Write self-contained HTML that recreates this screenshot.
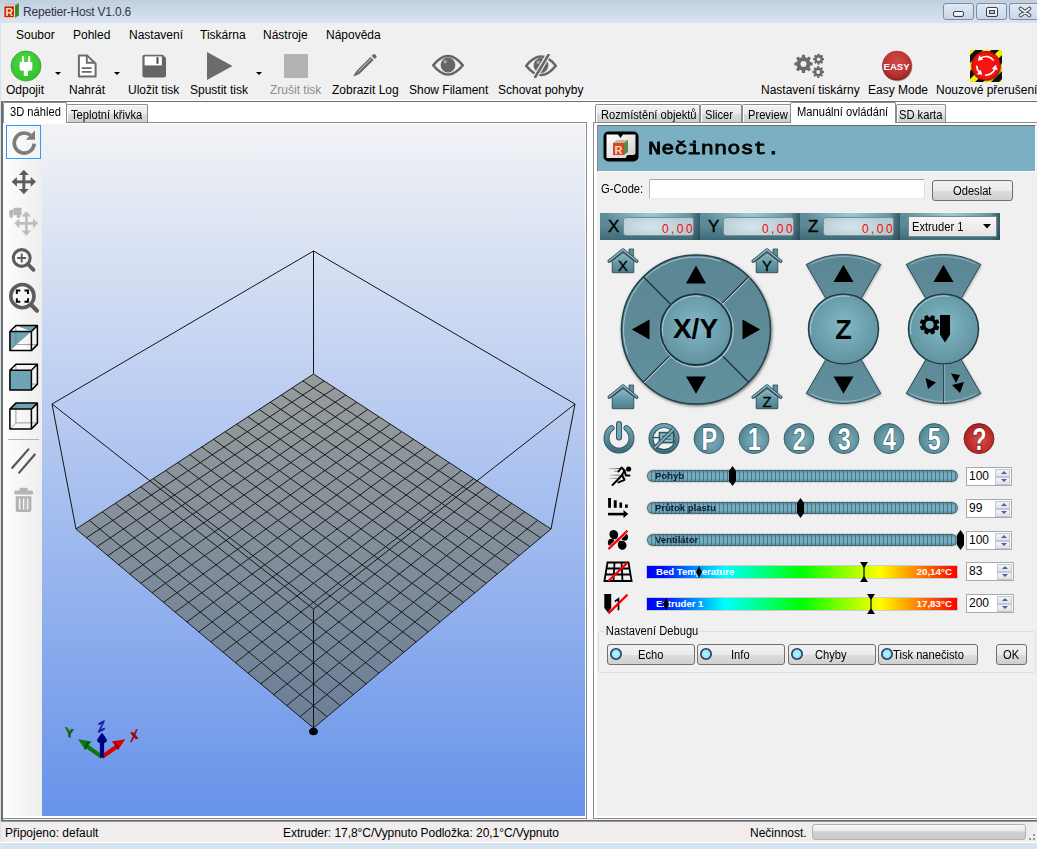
<!DOCTYPE html>
<html><head><meta charset="utf-8"><style>
*{margin:0;padding:0;box-sizing:border-box}
html,body{width:1037px;height:849px;overflow:hidden;background:#f0f0f0;font-family:"Liberation Sans",sans-serif;font-size:12px;color:#000;position:relative}
.a{position:absolute}
.t{position:absolute;white-space:nowrap;line-height:14px;font-size:12px}
#title{left:0;top:0;width:1037px;height:23px;background:linear-gradient(#c1cfdd,#d8e4f1)}
#frameL{left:0;top:22px;width:1px;height:827px;background:#d4e3f3}
#frameB{left:0;top:843px;width:1037px;height:6px;background:#d6e3f1}
.wb{position:absolute;top:3px;height:17px;border:1px solid #7d8ba6;border-radius:3px;background:linear-gradient(#dfe8f3,#cad7e8)}
.tab{position:absolute;border:1px solid #898c95;border-bottom:none;box-shadow:inset 1px 1px 0 #fff;border-radius:2px 2px 0 0;background:linear-gradient(#f2f2f2 0%,#ebebeb 50%,#dddddd 51%,#cfcfcf 100%)}
.tab.act{background:#fff}
.tt{position:absolute;white-space:nowrap;line-height:14px;font-size:12px;transform:scaleX(0.93);transform-origin:0 0}
.ms{position:absolute;white-space:nowrap;line-height:14px;font-size:12px;transform:scaleX(0.93);transform-origin:0 0}
.btn{position:absolute;border:1px solid #707070;border-radius:3px;background:linear-gradient(#f2f2f2 0%,#ebebeb 50%,#dddddd 51%,#cfcfcf 100%);text-align:center}
.num{position:absolute;width:46px;height:19px;border:1px solid #a9a9b0;background:#fff}
.num .v{position:absolute;left:2px;top:1px;font-size:12px;line-height:14px}
.spin{position:absolute;right:1px;top:1px;width:15px;height:15px}
.spin div{position:absolute;left:0;width:15px;height:8px;border:1px solid #c3c6cc;background:linear-gradient(#f4f4f6,#e1e3e8)}
.sl{position:absolute;left:647px;width:311px;height:12px;border-radius:6px;background:linear-gradient(rgba(20,50,60,0.4),rgba(255,255,255,0) 30%,rgba(255,255,255,0) 70%,rgba(20,50,60,0.4)),linear-gradient(90deg,#75afc0 0,#75afc0 3px,#4a7b8a 3px,#4a7b8a 4px);background-size:100% 100%,4px 100%;background-position:0 0,1px 0;box-shadow:inset 0 0 0 1px #4d6d77,0 0 1px 0.5px rgba(90,70,70,0.35)}
.sll{position:absolute;left:8px;top:-1px;font-size:9.5px;font-weight:bold;color:#0d1a3a;line-height:14px}
.tb{position:absolute;width:13px;height:19px;border-radius:50%;background:#000}
.temp{position:absolute;left:647px;width:310px;height:12px;background:linear-gradient(90deg,#0000ff 0%,#0010ff 5%,#00ffff 25%,#00ff00 50%,#ffff00 75%,#ff0000 100%);box-shadow:0 0 0 1px rgba(0,0,0,0.15)}
.tl{position:absolute;top:-1px;font-size:9.6px;font-weight:bold;color:#fff;line-height:14px}
.xs{top:213px;width:100px;height:27px;background:linear-gradient(90deg,rgba(0,0,0,0) 0,rgba(0,0,0,0) 90%,rgba(20,50,60,0.55) 100%),radial-gradient(ellipse 45% 70% at 50% 0%,rgba(170,215,228,0.85),rgba(170,215,228,0) 100%),linear-gradient(#5f8d99,#5a8894 50%,#3e6a77)}
.xf{top:217px;width:71px;height:19px;border:1px solid #7d8c90;border-radius:3px;background:radial-gradient(ellipse 50% 80% at 40% 50%,#d3e6eb,#b7ccd2)}

</style></head><body>
<!-- title bar -->
<div id="title" class="a"></div>
<svg class="a" style="left:0px;top:0px" width="22" height="22" viewBox="0 0 22 22">
<path d="M3.5 5.5 L6 3 H19 L14.8 5.5 Z" fill="#c9c0d8"/>
<path d="M14.8 5.5 L19 3 V15.5 L14.8 18 Z" fill="#4f9a3c"/><path d="M15.6 6 L18.4 4.2 V15 L15.6 16.8 Z" fill="#2f7a22" opacity="0.7"/>
<rect x="3.5" y="5.5" width="11.3" height="12.5" fill="#f3d9a6"/>
<rect x="4.4" y="6.4" width="9.5" height="10.7" fill="#c81e14"/>
<text x="9.2" y="15.6" font-family="Liberation Sans" font-weight="bold" font-size="10.5" fill="#fbe7b4" text-anchor="middle">R</text>
</svg>
<div class="t" style="left:23px;top:5px;font-size:12px;color:#33334d;letter-spacing:-0.2px">Repetier-Host V1.0.6</div>
<div class="wb" style="left:943px;width:31px"><div class="a" style="left:9px;top:7px;width:11px;height:6px;border:1px solid #3a3f4a;border-radius:2px;background:linear-gradient(#fdfdfd,#e2e2e2)"></div></div>
<div class="wb" style="left:976px;width:31px"><div class="a" style="left:9px;top:3px;width:12px;height:10px;border:1px solid #3a3f4a;border-radius:2px;background:linear-gradient(#fdfdfd,#e6e6e6)"><div class="a" style="left:2px;top:2px;width:6px;height:4px;border:1px solid #3a3f4a;background:#b5c6dc"></div></div></div>
<div class="wb" style="left:1009px;width:32px"><svg class="a" style="left:8px;top:2px" width="14" height="12" viewBox="0 0 14 12"><path d="M2.5 2.5 L11.5 9.5 M11.5 2.5 L2.5 9.5" stroke="#3a3f4a" stroke-width="3.6" stroke-linecap="round"/><path d="M2.5 2.5 L11.5 9.5 M11.5 2.5 L2.5 9.5" stroke="#f5f5f5" stroke-width="1.8" stroke-linecap="round"/></svg></div>
<div id="frameL" class="a"></div>

<!-- menu -->
<div class="t" style="left:16px;top:28px">Soubor</div>
<div class="t" style="left:73px;top:28px">Pohled</div>
<div class="t" style="left:129px;top:28px">Nastavení</div>
<div class="t" style="left:200px;top:28px">Tiskárna</div>
<div class="t" style="left:263px;top:28px">Nástroje</div>
<div class="t" style="left:326px;top:28px">Nápověda</div>

<!-- toolbar -->
<svg class="a" style="left:10px;top:50px" width="32" height="32" viewBox="0 0 32 32">
<defs><radialGradient id="gg" cx="0.45" cy="0.35" r="0.7"><stop offset="0" stop-color="#4ada40"/><stop offset="1" stop-color="#34bf2c"/></radialGradient></defs>
<circle cx="16" cy="16" r="15" fill="url(#gg)" stroke="#3a9a33" stroke-width="0.8"/>
<rect x="11.9" y="6" width="2" height="7" fill="#fff"/><rect x="18.2" y="6" width="2" height="7" fill="#fff"/>
<path d="M9.7 12 H22.3 V18.8 Q22.3 20.8 20.3 20.8 H17.9 V26.1 H13.8 V20.8 H11.7 Q9.7 20.8 9.7 18.8 Z" fill="#fff"/>
</svg>
<svg class="a" style="left:55px;top:72px" width="7" height="4"><path d="M0 0H6L3 3Z" fill="#000"/></svg>
<svg class="a" style="left:77px;top:54px" width="20" height="24" viewBox="0 0 20 24">
<path d="M1.9 1.4 H10 L18.6 9.8 V22.6 H1.9 Z" fill="#fff" stroke="#6b6b6b" stroke-width="2" stroke-linejoin="round"/>
<path d="M9.8 1.6 V8.8 H18.4" fill="none" stroke="#6b6b6b" stroke-width="1.9"/>
<rect x="4.8" y="13.2" width="9.8" height="1.8" fill="#6b6b6b"/><rect x="4.8" y="17" width="9.8" height="1.8" fill="#6b6b6b"/>
</svg>
<svg class="a" style="left:114px;top:72px" width="7" height="4"><path d="M0 0H6L3 3Z" fill="#000"/></svg>
<svg class="a" style="left:142px;top:54px" width="25" height="24" viewBox="0 0 25 24">
<path d="M2.4 0.8 H20.8 L24 4 V21.4 Q24 23.4 22 23.4 H2.4 Q0.4 23.4 0.4 21.4 V2.8 Q0.4 0.8 2.4 0.8Z" fill="#666"/>
<rect x="2.6" y="2.4" width="17.2" height="9" fill="#fff"/><rect x="14.4" y="3.2" width="2.2" height="6.6" fill="#555"/>
</svg>
<svg class="a" style="left:206px;top:52px" width="27" height="28" viewBox="0 0 27 28"><path d="M1 0 L26.5 14 L1 28 Z" fill="#6b6b6b"/></svg>
<svg class="a" style="left:256px;top:72px" width="7" height="4"><path d="M0 0H6L3 3Z" fill="#000"/></svg>
<div class="a" style="left:284px;top:54px;width:24px;height:24px;background:#b3b3b3;border-radius:1px"></div>
<svg class="a" style="left:352px;top:53px" width="26" height="24" viewBox="0 0 26 24">
<path d="M4.2 18.2 L18.5 3.9 L21.5 6.9 L7.2 21.2 Z" fill="#666"/><path d="M4.2 18.2 L7.2 21.2 L1 23.6 Z" fill="#666"/>
<path d="M19.6 2.8 L21 1.4 Q22 0.4 23.2 1.4 L24.2 2.4 Q25.2 3.6 24.2 4.6 L22.7 6 Z" fill="#666"/>
<path d="M6.3 18.6 L19.2 5.7" stroke="#d8d8d8" stroke-width="0.9"/>
</svg>
<svg class="a" style="left:431px;top:54px" width="34" height="24" viewBox="0 0 34 24">
<path d="M2.2 11.2 Q17 -7.3 31.8 11.2 Q17 29.7 2.2 11.2 Z" fill="none" stroke="#666" stroke-width="2.6" stroke-linejoin="round"/>
<circle cx="17" cy="11" r="7.4" fill="#666"/><circle cx="14.2" cy="7.8" r="1.7" fill="#a5a5a5"/>
</svg>
<svg class="a" style="left:525px;top:54px" width="34" height="24" viewBox="0 0 34 24">
<path d="M1.2 11.7 Q16 -6.8 30.8 11.7 Q16 30.2 1.2 11.7 Z" fill="none" stroke="#666" stroke-width="2.6" stroke-linejoin="round"/>
<circle cx="16" cy="11.5" r="7.4" fill="#666"/><circle cx="13.2" cy="8.3" r="1.7" fill="#a5a5a5"/>
<path d="M23.5 0.5 L10 23.5" stroke="#f0f0f0" stroke-width="5"/><path d="M23.5 0.8 L10.2 23" stroke="#666" stroke-width="2.6" stroke-linecap="round"/>
</svg>
<svg class="a" style="left:790px;top:50px" width="40" height="32" viewBox="790 50 40 32"><g transform="translate(803.5 63.9)" fill="#6b6b6b"><circle r="7"/><rect x="-1.6" y="-9.1" width="3.2" height="9.1" rx="0.6" transform="rotate(0.0)"/><rect x="-1.6" y="-9.1" width="3.2" height="9.1" rx="0.6" transform="rotate(45.0)"/><rect x="-1.6" y="-9.1" width="3.2" height="9.1" rx="0.6" transform="rotate(90.0)"/><rect x="-1.6" y="-9.1" width="3.2" height="9.1" rx="0.6" transform="rotate(135.0)"/><rect x="-1.6" y="-9.1" width="3.2" height="9.1" rx="0.6" transform="rotate(180.0)"/><rect x="-1.6" y="-9.1" width="3.2" height="9.1" rx="0.6" transform="rotate(225.0)"/><rect x="-1.6" y="-9.1" width="3.2" height="9.1" rx="0.6" transform="rotate(270.0)"/><rect x="-1.6" y="-9.1" width="3.2" height="9.1" rx="0.6" transform="rotate(315.0)"/></g><circle cx="803.5" cy="63.9" r="3.0" fill="#f0f0f0"/><g transform="translate(818.6 59.2)" fill="#6b6b6b"><circle r="4.1"/><rect x="-1.1" y="-5.5" width="2.2" height="5.5" rx="0.6" transform="rotate(0.0)"/><rect x="-1.1" y="-5.5" width="2.2" height="5.5" rx="0.6" transform="rotate(45.0)"/><rect x="-1.1" y="-5.5" width="2.2" height="5.5" rx="0.6" transform="rotate(90.0)"/><rect x="-1.1" y="-5.5" width="2.2" height="5.5" rx="0.6" transform="rotate(135.0)"/><rect x="-1.1" y="-5.5" width="2.2" height="5.5" rx="0.6" transform="rotate(180.0)"/><rect x="-1.1" y="-5.5" width="2.2" height="5.5" rx="0.6" transform="rotate(225.0)"/><rect x="-1.1" y="-5.5" width="2.2" height="5.5" rx="0.6" transform="rotate(270.0)"/><rect x="-1.1" y="-5.5" width="2.2" height="5.5" rx="0.6" transform="rotate(315.0)"/></g><circle cx="818.6" cy="59.2" r="1.7" fill="#f0f0f0"/><g transform="translate(818.2 72)" fill="#6b6b6b"><circle r="4.4"/><rect x="-1.15" y="-5.9" width="2.3" height="5.9" rx="0.6" transform="rotate(0.0)"/><rect x="-1.15" y="-5.9" width="2.3" height="5.9" rx="0.6" transform="rotate(45.0)"/><rect x="-1.15" y="-5.9" width="2.3" height="5.9" rx="0.6" transform="rotate(90.0)"/><rect x="-1.15" y="-5.9" width="2.3" height="5.9" rx="0.6" transform="rotate(135.0)"/><rect x="-1.15" y="-5.9" width="2.3" height="5.9" rx="0.6" transform="rotate(180.0)"/><rect x="-1.15" y="-5.9" width="2.3" height="5.9" rx="0.6" transform="rotate(225.0)"/><rect x="-1.15" y="-5.9" width="2.3" height="5.9" rx="0.6" transform="rotate(270.0)"/><rect x="-1.15" y="-5.9" width="2.3" height="5.9" rx="0.6" transform="rotate(315.0)"/></g><circle cx="818.2" cy="72" r="1.9" fill="#f0f0f0"/></svg>
<svg class="a" style="left:880px;top:49px" width="34" height="34" viewBox="880 49 34 34">
<defs><radialGradient id="er" cx="0.5" cy="0.35" r="0.65"><stop offset="0" stop-color="#d24a48"/><stop offset="0.7" stop-color="#b73332"/><stop offset="1" stop-color="#8e2020"/></radialGradient></defs>
<circle cx="897.5" cy="66.5" r="15" fill="#000" opacity="0.25"/>
<circle cx="897" cy="65.7" r="14.9" fill="url(#er)"/>
<text x="896.6" y="69.8" font-family="Liberation Sans" font-weight="bold" font-size="9.6" fill="#fff" text-anchor="middle">EASY</text>
</svg>
<svg class="a" style="left:969px;top:49px" width="34" height="34" viewBox="969 49 34 34"><defs><pattern id="hz" width="11.3" height="11.3" patternUnits="userSpaceOnUse" patternTransform="translate(970 50) rotate(45) translate(3.65 0)"><rect width="11.3" height="11.3" fill="#111"/><rect x="5.65" width="5.65" height="11.3" fill="#f5f000"/></pattern><radialGradient id="rb" cx="0.5" cy="0.5" r="0.5"><stop offset="0" stop-color="#ff1010"/><stop offset="0.85" stop-color="#f41010"/><stop offset="1" stop-color="#b00c0c"/></radialGradient></defs><rect x="970" y="50" width="32" height="32" fill="url(#hz)"/><circle cx="986.5" cy="66.5" r="15" fill="#000" opacity="0.35"/><circle cx="986" cy="65.8" r="14.7" fill="url(#rb)"/><path d="M993.62 60.47 A9.3 9.3 0 0 0 980.80 58.09" fill="none" stroke="#fff" stroke-width="1.7"/><path d="M977.84 60.63 L979.26 55.32 L983.27 59.78 Z" fill="#fff"/><path d="M976.70 65.80 A9.3 9.3 0 0 0 979.31 72.26" fill="none" stroke="#fff" stroke-width="1.7"/><path d="M982.32 74.73 L976.85 74.26 L980.55 69.53 Z" fill="#fff"/><path d="M985.19 75.06 A9.3 9.3 0 0 0 994.84 68.67" fill="none" stroke="#fff" stroke-width="1.7"/><path d="M995.61 64.85 L997.77 69.91 L991.86 68.86 Z" fill="#fff"/></svg>
<div class="t" style="left:6px;top:83px">Odpojit</div>
<div class="t" style="left:69px;top:83px">Nahrát</div>
<div class="t" style="left:128px;top:83px">Uložit tisk</div>
<div class="t" style="left:190px;top:83px">Spustit tisk</div>
<div class="t" style="left:270px;top:83px;color:#8d8d8d">Zrušit tisk</div>
<div class="t" style="left:332px;top:83px">Zobrazit Log</div>
<div class="t" style="left:409px;top:83px">Show Filament</div>
<div class="t" style="left:498px;top:83px">Schovat pohyby</div>
<div class="t" style="left:761px;top:83px">Nastavení tiskárny</div>
<div class="t" style="left:868px;top:83px">Easy Mode</div>
<div class="t" style="left:936px;top:83px">Nouzové přerušení</div>

<!-- split container border -->
<div class="a" style="left:1px;top:100px;width:1036px;height:1px;background:#fff"></div>
<div class="a" style="left:1px;top:101px;width:1036px;height:1px;background:#6d6d6d"></div>
<div class="a" style="left:1px;top:101px;width:2px;height:720px;background:#6d6d6d"></div>
<div class="a" style="left:1px;top:820px;width:1036px;height:1px;background:#6a6a6a"></div><div class="a" style="left:1px;top:821px;width:1036px;height:1px;background:#9a9a9a"></div>
<div class="a" style="left:3px;top:102px;width:1034px;height:717px;background:#fff"></div>

<!-- left tabs -->
<div class="tab" style="left:66px;top:104px;width:82px;height:18px"></div>
<div class="tt" style="left:71px;top:108px">Teplotní křivka</div>
<div class="a" style="left:3px;top:122px;width:584px;height:1px;background:#898c95"></div>
<div class="tab act" style="left:3px;top:102px;width:64px;height:21px;border-color:#898c95"></div>
<div class="tt" style="left:10px;top:105px">3D náhled</div>
<!-- left tab page -->
<div class="a" style="left:586px;top:122px;width:1px;height:697px;background:#898c95"></div>
<div class="a" style="left:3px;top:818px;width:584px;height:1px;background:#898c95"></div>
<div class="a" style="left:4px;top:124px;width:38px;height:692px;background:linear-gradient(90deg,#fdfdfd,#eeeeee)"></div>
<div class="a" style="left:42px;top:124px;width:543px;height:692px;background:linear-gradient(#f2f3f5,#6793ea)"></div>

<!-- 3D view -->
<svg class="a" style="left:42px;top:123px" width="544" height="694" viewBox="0 0 544 694">
<defs><linearGradient id="bed" gradientUnits="userSpaceOnUse" x1="0" y1="251" x2="0" y2="605"><stop offset="0" stop-color="#979c9c"/><stop offset="1" stop-color="#6b7f98"/></linearGradient></defs>
<path d="M271.5 251 L509 406 L271.5 605 L34 406 Z" fill="url(#bed)"/>
<path d="M271.50 251.00L34.00 406.00M271.50 251.00L509.00 406.00M282.12 257.93L44.46 414.77M260.88 257.93L498.54 414.77M292.86 264.94L55.06 423.65M250.14 264.94L487.94 423.65M303.72 272.03L65.79 432.64M239.28 272.03L477.21 432.64M314.70 279.20L76.66 441.74M228.30 279.20L466.34 441.74M325.81 286.45L87.66 450.96M217.19 286.45L455.34 450.96M337.05 293.78L98.81 460.30M205.95 293.78L444.19 460.30M348.41 301.19L110.10 469.77M194.59 301.19L432.90 469.77M359.91 308.70L121.54 479.35M183.09 308.70L421.46 479.35M371.54 316.29L133.14 489.07M171.46 316.29L409.86 489.07M383.30 323.97L144.88 498.91M159.70 323.97L398.12 498.91M395.21 331.73L156.78 508.88M147.79 331.73L386.22 508.88M407.25 339.60L168.84 518.99M135.75 339.60L374.16 518.99M419.44 347.55L181.07 529.23M123.56 347.55L361.93 529.23M431.77 355.60L193.46 539.61M111.23 355.60L349.54 539.61M444.26 363.75L206.02 550.14M98.74 363.75L336.98 550.14M456.89 371.99L218.76 560.81M86.11 371.99L324.24 560.81M469.68 380.34L231.67 571.62M73.32 380.34L311.33 571.62M482.63 388.79L244.76 582.59M60.37 388.79L298.24 582.59M495.73 397.34L258.04 593.72M47.27 397.34L284.96 593.72M509.00 406.00L271.50 605.00M34.00 406.00L271.50 605.00" stroke="#1a1a1a" stroke-width="1" fill="none"/>
<path d="M271.5 128 L10 281 L271.5 486 L533 281 Z M271.5 128 V251 M10 281 L34 406 M533 281 L509 406 M271.5 486 V605" stroke="#141414" stroke-width="1" fill="none"/>
<ellipse cx="271.5" cy="608.5" rx="4.5" ry="3.8" fill="#000"/>
</svg>
<!-- axes -->
<svg class="a" style="left:60px;top:712px" width="85" height="52" viewBox="60 712 85 52">
<path d="M102 757 L85 745" stroke="#0a7a0a" stroke-width="4"/><path d="M78 739.3 L91.5 741.5 L85 749.5 Z" fill="#0a7a0a"/><path d="M88.5 741.5 L85 749.5" stroke="#064a06" stroke-width="1.6"/>
<path d="M102 757 L119 745" stroke="#d80000" stroke-width="4"/><path d="M125.3 739.3 L111.8 741.5 L118.3 749.5 Z" fill="#d80000"/><path d="M114.8 741.5 L118.3 749.5" stroke="#880000" stroke-width="1.6"/>
<path d="M102 757.5 V742" stroke="#000080" stroke-width="4.2"/><path d="M102 732.8 Q104 735 107 740 Q107 743 102 743.5 Q97 743 97 740 Q100 735 102 732.8 Z" fill="#000080"/>
<text transform="translate(69.4 737) skewY(15)" font-family="Liberation Sans" font-weight="bold" font-size="12.5" fill="#0b5e0b" text-anchor="middle" stroke="#0b5e0b" stroke-width="0.6">Y</text>
<text transform="translate(101.4 731) skewY(-28) scale(0.85 1)" font-family="Liberation Sans" font-weight="bold" font-size="13" fill="#1414d2" text-anchor="middle" stroke="#1010a0" stroke-width="0.6">Z</text>
<text transform="translate(134.2 740) skewY(-28) scale(0.85 1)" font-family="Liberation Sans" font-weight="bold" font-size="13" fill="#a80000" text-anchor="middle" stroke="#900000" stroke-width="0.6">X</text>
</svg>

<!-- left toolbar icons -->
<svg class="a" style="left:4px;top:124px" width="38" height="392" viewBox="4 124 38 392">
<!-- rotate -->
<path d="M34.2 143.6 A10 10 0 1 1 30.4 135.2" fill="none" stroke="#5c5c5c" stroke-width="3.6"/>
<path d="M35 130.5 V139.8 H25.8 Z" fill="#5c5c5c"/>
<!-- move -->
<g fill="#5c5c5c">
<rect x="22.4" y="173" width="2.9" height="18"/><rect x="15" y="180.4" width="18" height="2.9"/>
<path d="M23.85 169.7 L28.8 175 H18.9 Z"/><path d="M23.85 194.3 L28.8 189 H18.9 Z"/>
<path d="M11.6 181.85 L16.9 176.9 V186.8 Z"/><path d="M36 181.85 L30.7 176.9 V186.8 Z"/>
</g>
<!-- move object -->
<g fill="#bdbdbd">
<rect x="25" y="214.5" width="2.7" height="18"/><rect x="17.4" y="222" width="18" height="2.7"/>
<path d="M26.35 211.2 L31.2 216.5 H21.5 Z"/><path d="M26.35 235.8 L31.2 230.5 H21.5 Z"/>
<path d="M14.2 223.35 L19.5 218.5 V228.2 Z"/><path d="M38.3 223.35 L33 218.5 V228.2 Z"/>
</g>
<g fill="#b8b8b8"><rect x="13.5" y="207.8" width="8" height="7.5" rx="0.8"/><path d="M9 215.3 V211.5 L11 209.5 H13.5 V215.3 Z"/><circle cx="11.3" cy="216.3" r="1.7"/><circle cx="18.5" cy="216.3" r="1.7"/></g>
<!-- zoom in -->
<circle cx="21.7" cy="258" r="8.4" fill="none" stroke="#5c5c5c" stroke-width="3.1"/>
<path d="M27.7 264 L33.5 269.8" stroke="#5c5c5c" stroke-width="3.8" stroke-linecap="round"/>
<path d="M21.7 253.5 V262.5 M17.2 258 H26.2" stroke="#5c5c5c" stroke-width="1.9"/>
<!-- zoom fit -->
<circle cx="22.4" cy="296.1" r="11.6" fill="none" stroke="#5c5c5c" stroke-width="3.6"/>
<path d="M30.8 304.5 L37 310.7" stroke="#5c5c5c" stroke-width="4.2" stroke-linecap="round"/>
<path d="M16.8 294 V290.5 H20.3 M24.5 290.5 H28 V294 M28 298.2 V301.7 H24.5 M20.3 301.7 H16.8 V298.2" fill="none" stroke="#000" stroke-width="1.9"/>
<!-- cube 1 -->
<g stroke-linejoin="round">
<path d="M9.9 331.5 L31.4 350.6 H9.9 Z" fill="#fff"/>
<path d="M9.9 331.5 H31.4 L9.9 350.6 Z" fill="#6fa4b4"/>
<path d="M9.9 331.5 L15.9 325.5 H37.4 L31.4 331.5 Z" fill="#6fa4b4"/>
<path d="M15.9 325.5 L31.4 331.5 H9.9 Z" fill="#fff"/>
<path d="M15.9 325.5 V344.6 H37.4 M15.9 344.6 L9.9 350.6" fill="none" stroke="#777" stroke-width="0.7"/>
<path d="M9.9 331.5 H31.4 V350.6 H9.9 Z M9.9 331.5 L15.9 325.5 H37.4 V344.6 L31.4 350.6 M31.4 331.5 L37.4 325.5" fill="none" stroke="#000" stroke-width="1.5"/>
<!-- cube 2 -->
<path d="M15.9 364.3 V384.1 H37.4 M15.9 384.1 L9.9 390.1" fill="none" stroke="#777" stroke-width="0.7"/>
<path d="M9.9 370.3 H31.4 V390.1 H9.9 Z" fill="#6fa4b4"/>
<path d="M9.9 370.3 H31.4 V390.1 H9.9 Z M9.9 370.3 L15.9 364.3 H37.4 V384.1 L31.4 390.1 M31.4 370.3 L37.4 364.3" fill="none" stroke="#000" stroke-width="1.5"/>
<!-- cube 3 -->
<path d="M9.9 409.1 L15.9 403.1 H37.4 L31.4 409.1 Z" fill="#6fa4b4"/>
<path d="M15.9 403.1 V422.9 H37.4 M15.9 422.9 L9.9 428.9" fill="none" stroke="#777" stroke-width="0.7"/>
<path d="M9.9 409.1 H31.4 V428.9 H9.9 Z M9.9 409.1 L15.9 403.1 H37.4 V422.9 L31.4 428.9 M31.4 409.1 L37.4 403.1" fill="none" stroke="#000" stroke-width="1.5"/>
</g>
<!-- separator -->
<rect x="8" y="439" width="31" height="1" fill="#b4b4b4"/>
<!-- parallel lines -->
<path d="M12.3 467.8 L28.4 449.4 M19.2 472.6 L34.8 454.5" stroke="#555" stroke-width="2.2" stroke-linecap="round"/>
<!-- trash -->
<g fill="#b3b3b3"><rect x="19.4" y="487.8" width="8.5" height="3.5" rx="1.5"/><rect x="14.1" y="490.6" width="19.1" height="4" rx="1.8"/>
<path d="M15.7 496.3 H31.4 V510 Q31.4 511.9 29.5 511.9 H17.6 Q15.7 511.9 15.7 510 Z"/></g>
<g fill="#f3f3f3"><rect x="18.8" y="498.5" width="1.6" height="11"/><rect x="22.8" y="498.5" width="1.6" height="11"/><rect x="26.8" y="498.5" width="1.6" height="11"/></g>
</svg>

<div class="a" style="left:6px;top:125px;width:35px;height:34px;border:1px solid #3399ff;background:rgba(255,255,255,0.2)"></div>

<!-- right tabs -->
<div class="a" style="left:593px;top:122px;width:444px;height:1px;background:#898c95"></div>
<div class="tab" style="left:595px;top:104px;width:105px;height:18px"></div>
<div class="tt" style="left:601px;top:108px">Rozmístění objektů</div>
<div class="tab" style="left:700px;top:104px;width:42px;height:18px"></div>
<div class="tt" style="left:705px;top:108px">Slicer</div>
<div class="tab" style="left:742px;top:104px;width:49px;height:18px"></div>
<div class="tt" style="left:748px;top:108px">Preview</div>
<div class="tab act" style="left:790px;top:102px;width:106px;height:21px"></div>
<div class="tt" style="left:797px;top:105px">Manuální ovládání</div>
<div class="tab" style="left:896px;top:104px;width:50px;height:18px"></div>
<div class="tt" style="left:899px;top:108px">SD karta</div>
<div class="a" style="left:593px;top:122px;width:1px;height:697px;background:#898c95"></div>
<div class="a" style="left:593px;top:818px;width:444px;height:1px;background:#898c95"></div>
<div class="a" style="left:597px;top:125px;width:440px;height:691px;background:#f0f0f0"></div>

<!-- right panel header -->
<div class="a" style="left:597px;top:125px;width:439px;height:47px;background:#7ab0c1;border-top:1px solid #6b6b6b;border-left:1px solid #8a8a8a;border-right:1px solid #fff;border-bottom:1px solid #fff"></div>
<div class="t" style="left:648px;top:139px;font-family:'Liberation Mono',monospace;font-weight:normal;-webkit-text-stroke:0.9px #000;font-size:22px;line-height:24px;transform:scaleY(0.86);transform-origin:0 0">Nečinnost.</div>

<!-- status bar -->
<div class="a" style="left:1px;top:822px;width:1036px;height:20px;background:#f0edec"></div>
<div class="a" style="left:0;top:842px;width:1037px;height:1px;background:#fff"></div>
<div id="frameB" class="a"></div>
<div class="t" style="left:5px;top:826px">Připojeno: default</div>
<div class="t" style="left:283px;top:826px;letter-spacing:-0.06px">Extruder: 17,8°C/Vypnuto Podložka: 20,1°C/Vypnuto</div>
<div class="t" style="left:750px;top:826px">Nečinnost.</div>
<div class="a" style="left:812px;top:824px;width:214px;height:16px;border:1px solid #b2b2b2;border-radius:3px;background:linear-gradient(#f7f7f7 0%,#ececec 40%,#d0d0d0 50%,#cacaca 100%)"></div>

<!-- ===== right panel content ===== -->
<!-- header icon -->
<svg class="a" style="left:603px;top:131px" width="37" height="31" viewBox="0 0 37 31">
<defs><linearGradient id="hw" x1="0" y1="0" x2="1" y2="1"><stop offset="0" stop-color="#ffffff"/><stop offset="1" stop-color="#cfcfcf"/></linearGradient></defs>
<rect x="0.5" y="0.5" width="35" height="30" rx="5" fill="#000"/>
<path d="M3.5 3.5 H15 L17.5 7 L20 3.5 H32.5 V22 Q32.5 24 30 24 H26 Q23 24 23 27 H3.5 Z" fill="url(#hw)"/>
<path d="M10 12 L14 9 H25 L21 12 Z" fill="#c8b88e"/><path d="M21 12 L25 9 V21 L21 24 Z" fill="#5f8a45"/>
<rect x="10" y="12" width="11" height="12" fill="#d8452a"/>
<text x="15.5" y="22.5" font-family="Liberation Sans" font-weight="bold" font-size="11" fill="#f2deb0" text-anchor="middle">R</text>
</svg>
<!-- G-Code row -->
<div class="ms" style="left:601px;top:182px">G-Code:</div>
<div class="a" style="left:649px;top:179px;width:276px;height:20px;background:#fff;border:1px solid #abadb3;border-radius:2px;border-color:#a0a0a0 #dcdfe6 #e3e9ef #b5b5b5"></div>
<div class="btn" style="left:932px;top:180px;width:81px;height:21px"></div>
<div class="ms" style="left:953px;top:184px">Odeslat</div>

<!-- XYZ bar -->
<div class="a xs" style="left:600px"></div>
<div class="a xs" style="left:700px"></div>
<div class="a xs" style="left:800px"></div>
<div class="a xs" style="left:900px"></div>
<div class="a xf" style="left:623px"></div>
<div class="t" style="left:608px;top:217px;font-size:17px;line-height:20px;-webkit-text-stroke:0.4px #000">X</div>
<div class="t" style="left:643px;top:222px;width:52px;text-align:right;font-size:12px;color:#ff0000;letter-spacing:2.4px">0,00</div>
<div class="a xf" style="left:723px"></div>
<div class="t" style="left:708px;top:217px;font-size:17px;line-height:20px;-webkit-text-stroke:0.4px #000">Y</div>
<div class="t" style="left:743px;top:222px;width:52px;text-align:right;font-size:12px;color:#ff0000;letter-spacing:2.4px">0,00</div>
<div class="a xf" style="left:823px"></div>
<div class="t" style="left:808px;top:217px;font-size:17px;line-height:20px;-webkit-text-stroke:0.4px #000">Z</div>
<div class="t" style="left:843px;top:222px;width:52px;text-align:right;font-size:12px;color:#ff0000;letter-spacing:2.4px">0,00</div>
<div class="a" style="left:908px;top:216px;width:89px;height:21px;border:1px solid #7a8a90;background:linear-gradient(#f6f6f6,#e4e4e4);border-radius:1px"></div>
<div class="ms" style="left:912px;top:220px">Extruder 1</div>
<svg class="a" style="left:983px;top:224px" width="9" height="5"><path d="M0 0H8L4 4.5Z" fill="#000"/></svg>

<!-- jog -->
<svg class="a" style="left:598px;top:244px" width="404" height="170" viewBox="0 0 404 170">
<defs>
<radialGradient id="ic" cx="0.5" cy="0.45" r="0.6"><stop offset="0" stop-color="#84b9c7"/><stop offset="1" stop-color="#5d8e9b"/></radialGradient>
<linearGradient id="og" x1="0" y1="0" x2="0" y2="1"><stop offset="0" stop-color="#5b8693"/><stop offset="1" stop-color="#62909d"/></linearGradient>
<filter id="sh" x="-10%" y="-10%" width="120%" height="120%"><feGaussianBlur stdDeviation="1.5"/></filter>
<linearGradient id="hg" x1="0" y1="0" x2="0" y2="1"><stop offset="0" stop-color="#80b3c1"/><stop offset="1" stop-color="#4f7f8c"/></linearGradient>
</defs>
<circle cx="98.8" cy="86.7" r="75.5" fill="#000" opacity="0.5" filter="url(#sh)"/>
<circle cx="98" cy="85.5" r="74.5" fill="url(#og)" stroke="#233f48" stroke-width="1.5"/>
<path d="M29.87 110.30 A72.5 72.5 0 0 1 122.80 17.37" stroke="#a9ccd5" stroke-width="1" fill="none" opacity="0.9"/>
<path d="M123.10 110.60 L150.68 138.18" stroke="#1d3640" stroke-width="1.4"/>
<path d="M72.90 110.60 L45.32 138.18" stroke="#1d3640" stroke-width="1.3"/>
<path d="M73.68 111.38 L46.10 138.96" stroke="#d0e4e9" stroke-width="1"/>
<path d="M72.90 60.40 L45.32 32.82" stroke="#1d3640" stroke-width="1.4"/>
<path d="M123.10 60.40 L150.68 32.82" stroke="#1d3640" stroke-width="1.3"/>
<path d="M123.88 61.18 L151.46 33.60" stroke="#d0e4e9" stroke-width="1"/>
<circle cx="98.6" cy="86.1" r="36.7" fill="none" stroke="#bcd7de" stroke-width="1.2" opacity="0.9"/>
<circle cx="98" cy="85.5" r="35.5" fill="url(#ic)" stroke="#1b343d" stroke-width="1.8"/>
<path d="M65.01 91.32 A33.5 33.5 0 0 1 103.82 52.51" stroke="#b9dbe3" stroke-width="1" fill="none" opacity="0.8"/>
<path d="M98 21.5 L108 39.5 L88 39.5 Z" fill="#000"/>
<path d="M98 149.7 L108 132.5 L88 132.5 Z" fill="#000"/>
<path d="M33.799999999999955 85.5 L51.5 75.5 L51.5 95.5 Z" fill="#000"/>
<path d="M162.20000000000005 85.5 L144.5 75.5 L144.5 95.5 Z" fill="#000"/>
<text x="97.5" y="93.80000000000001" font-family="Liberation Sans" font-weight="bold" font-size="28" text-anchor="middle" fill="#000">X/Y</text>
<path d="M245.50 85.00 L208.25 20.48 A74.5 74.5 0 0 1 282.75 20.48 Z" fill="#000" opacity="0.4" filter="url(#sh)" transform="translate(0.5 1)"/>
<path d="M245.50 85.00 L208.25 20.48 A74.5 74.5 0 0 1 282.75 20.48 Z" fill="url(#og)" stroke="#2b4a54" stroke-width="1"/>
<path d="M212.59 20.40 A72.5 72.5 0 0 1 278.41 20.40" stroke="#a9ccd5" stroke-width="0.9" fill="none" opacity="0.7"/>
<path d="M245.50 85.00 L282.75 149.52 A74.5 74.5 0 0 1 208.25 149.52 Z" fill="#000" opacity="0.4" filter="url(#sh)" transform="translate(0.5 1)"/>
<path d="M245.50 85.00 L282.75 149.52 A74.5 74.5 0 0 1 208.25 149.52 Z" fill="url(#og)" stroke="#2b4a54" stroke-width="1"/>
<path d="M278.41 149.60 A72.5 72.5 0 0 1 212.59 149.60" stroke="#a9ccd5" stroke-width="0.9" fill="none" opacity="0.7"/>
<circle cx="245.5" cy="85" r="36" fill="#9fc4ce" opacity="0.6"/>
<circle cx="245.5" cy="85" r="35" fill="url(#ic)" stroke="#1f3a44" stroke-width="1.4"/>
<path d="M213.00 90.73 A33 33 0 0 1 251.23 52.50" stroke="#b9dbe3" stroke-width="1" fill="none" opacity="0.8"/>
<path d="M245.5 20.80000000000001 L255.5 38 L235.5 38 Z" fill="#000"/>
<path d="M345.50 85.00 L308.25 20.48 A74.5 74.5 0 0 1 382.75 20.48 Z" fill="#000" opacity="0.4" filter="url(#sh)" transform="translate(0.5 1)"/>
<path d="M345.50 85.00 L308.25 20.48 A74.5 74.5 0 0 1 382.75 20.48 Z" fill="url(#og)" stroke="#2b4a54" stroke-width="1"/>
<path d="M312.59 20.40 A72.5 72.5 0 0 1 378.41 20.40" stroke="#a9ccd5" stroke-width="0.9" fill="none" opacity="0.7"/>
<path d="M345.50 85.00 L382.75 149.52 A74.5 74.5 0 0 1 308.25 149.52 Z" fill="#000" opacity="0.4" filter="url(#sh)" transform="translate(0.5 1)"/>
<path d="M345.50 85.00 L382.75 149.52 A74.5 74.5 0 0 1 308.25 149.52 Z" fill="url(#og)" stroke="#2b4a54" stroke-width="1"/>
<path d="M378.41 149.60 A72.5 72.5 0 0 1 312.59 149.60" stroke="#a9ccd5" stroke-width="0.9" fill="none" opacity="0.7"/>
<circle cx="345.5" cy="85" r="36" fill="#9fc4ce" opacity="0.6"/>
<circle cx="345.5" cy="85" r="35" fill="url(#ic)" stroke="#1f3a44" stroke-width="1.4"/>
<path d="M313.00 90.73 A33 33 0 0 1 351.23 52.50" stroke="#b9dbe3" stroke-width="1" fill="none" opacity="0.8"/>
<path d="M345.5 20.80000000000001 L355.5 38 L335.5 38 Z" fill="#000"/>
<path d="M245.5 149.7 L255.5 132.5 L235.5 132.5 Z" fill="#000"/>
<text x="245.5" y="95" font-family="Liberation Sans" font-weight="bold" font-size="27" text-anchor="middle" fill="#000">Z</text>
<path d="M345.5 120 V159.5" stroke="#2b4a54" stroke-width="1"/>
<path d="M346.7 120 V159" stroke="#a9ccd5" stroke-width="0.8" opacity="0.7"/>
<path d="M327.5 134 L338 138.5 L330 145 Z" fill="#000"/>
<path d="M353 129.5 L362 131 L358 139 Z" fill="#000"/>
<path d="M354 141 L366 138 L362 149 Z" fill="#000"/>
<g transform="translate(331.6 80.80000000000001)" fill="#000"><circle r="7.6"/><rect x="-2.1" y="-9.8" width="4.2" height="19.6" rx="0.8" transform="rotate(22.5)"/><rect x="-2.1" y="-9.8" width="4.2" height="19.6" rx="0.8" transform="rotate(67.5)"/><rect x="-2.1" y="-9.8" width="4.2" height="19.6" rx="0.8" transform="rotate(112.5)"/><rect x="-2.1" y="-9.8" width="4.2" height="19.6" rx="0.8" transform="rotate(157.5)"/><circle r="4.1" fill="#76aebd"/></g>
<path d="M342 71 H352 V90.69999999999999 L347 98.39999999999998 L342 90.69999999999999 Z" fill="#000"/>
<g transform="translate(10 4.5)"><path d="M4.2 12.5 L15 4.5 L25.8 12.5 V23.8 Q25.8 24.2 25.4 24.2 H4.6 Q4.2 24.2 4.2 23.8 Z" fill="url(#hg)" stroke="#2b4a54" stroke-width="0.9"/><path d="M21 0.5 H25.6 V10 L21 6.5 Z" fill="#5f909d" stroke="#2b4a54" stroke-width="0.8"/><path d="M1.2 12.8 L15 1.6 L28.8 12.8" fill="none" stroke="#23414b" stroke-width="3.4" stroke-linejoin="round" stroke-linecap="round"/><path d="M1.2 12.5 L15 1.3 L28.8 12.5" fill="none" stroke="#86b8c6" stroke-width="1.6" stroke-linejoin="round" stroke-linecap="round"/><path d="M5 13 L15 5.5 L25 13" fill="none" stroke="#c9c9c9" stroke-width="0.8" opacity="0.7"/><text x="15" y="22.1" font-family="Liberation Sans" font-size="14.8" text-anchor="middle" fill="#000" stroke="#000" stroke-width="0.35">X</text></g>
<g transform="translate(154 4.5)"><path d="M4.2 12.5 L15 4.5 L25.8 12.5 V23.8 Q25.8 24.2 25.4 24.2 H4.6 Q4.2 24.2 4.2 23.8 Z" fill="url(#hg)" stroke="#2b4a54" stroke-width="0.9"/><path d="M21 0.5 H25.6 V10 L21 6.5 Z" fill="#5f909d" stroke="#2b4a54" stroke-width="0.8"/><path d="M1.2 12.8 L15 1.6 L28.8 12.8" fill="none" stroke="#23414b" stroke-width="3.4" stroke-linejoin="round" stroke-linecap="round"/><path d="M1.2 12.5 L15 1.3 L28.8 12.5" fill="none" stroke="#86b8c6" stroke-width="1.6" stroke-linejoin="round" stroke-linecap="round"/><path d="M5 13 L15 5.5 L25 13" fill="none" stroke="#c9c9c9" stroke-width="0.8" opacity="0.7"/><text x="15" y="22.1" font-family="Liberation Sans" font-size="14.8" text-anchor="middle" fill="#000" stroke="#000" stroke-width="0.35">Y</text></g>
<g transform="translate(10 140.5)"><path d="M4.2 12.5 L15 4.5 L25.8 12.5 V23.8 Q25.8 24.2 25.4 24.2 H4.6 Q4.2 24.2 4.2 23.8 Z" fill="url(#hg)" stroke="#2b4a54" stroke-width="0.9"/><path d="M21 0.5 H25.6 V10 L21 6.5 Z" fill="#5f909d" stroke="#2b4a54" stroke-width="0.8"/><path d="M1.2 12.8 L15 1.6 L28.8 12.8" fill="none" stroke="#23414b" stroke-width="3.4" stroke-linejoin="round" stroke-linecap="round"/><path d="M1.2 12.5 L15 1.3 L28.8 12.5" fill="none" stroke="#86b8c6" stroke-width="1.6" stroke-linejoin="round" stroke-linecap="round"/><path d="M5 13 L15 5.5 L25 13" fill="none" stroke="#c9c9c9" stroke-width="0.8" opacity="0.7"/></g>
<g transform="translate(154 140.5)"><path d="M4.2 12.5 L15 4.5 L25.8 12.5 V23.8 Q25.8 24.2 25.4 24.2 H4.6 Q4.2 24.2 4.2 23.8 Z" fill="url(#hg)" stroke="#2b4a54" stroke-width="0.9"/><path d="M21 0.5 H25.6 V10 L21 6.5 Z" fill="#5f909d" stroke="#2b4a54" stroke-width="0.8"/><path d="M1.2 12.8 L15 1.6 L28.8 12.8" fill="none" stroke="#23414b" stroke-width="3.4" stroke-linejoin="round" stroke-linecap="round"/><path d="M1.2 12.5 L15 1.3 L28.8 12.5" fill="none" stroke="#86b8c6" stroke-width="1.6" stroke-linejoin="round" stroke-linecap="round"/><path d="M5 13 L15 5.5 L25 13" fill="none" stroke="#c9c9c9" stroke-width="0.8" opacity="0.7"/><text x="15" y="22.1" font-family="Liberation Sans" font-size="14.8" text-anchor="middle" fill="#000" stroke="#000" stroke-width="0.35">Z</text></g>
</svg>

<!-- controls -->
<svg class="a" style="left:598px;top:418px" width="400" height="42" viewBox="0 0 400 42">
<defs>
<radialGradient id="cb" cx="0.55" cy="0.55" r="0.6"><stop offset="0" stop-color="#82b6c4"/><stop offset="1" stop-color="#4f7f8c"/></radialGradient>
<radialGradient id="cr" cx="0.55" cy="0.55" r="0.6"><stop offset="0" stop-color="#e04b48"/><stop offset="1" stop-color="#a81e1c"/></radialGradient>
<linearGradient id="pw" x1="0" y1="0" x2="0" y2="1"><stop offset="0" stop-color="#6fa3b1"/><stop offset="1" stop-color="#3f6e7b"/></linearGradient>
</defs>
<path d="M13.5 10.100000000000023 A12.5 12.5 0 1 0 28.5 10.100000000000023" fill="none" stroke="#2f5560" stroke-width="6" stroke-linecap="round"/>
<path d="M13.5 10.100000000000023 A12.5 12.5 0 1 0 28.5 10.100000000000023" fill="none" stroke="url(#pw)" stroke-width="4.2" stroke-linecap="round"/>
<path d="M21 6.100000000000023 V19.600000000000023" stroke="#2f5560" stroke-width="6" stroke-linecap="round"/>
<path d="M21 6.100000000000023 V19.600000000000023" stroke="#6fa8b7" stroke-width="4" stroke-linecap="round"/>
<circle cx="66" cy="20.600000000000023" r="13" fill="none" stroke="#2f5560" stroke-width="5"/>
<circle cx="66" cy="20.600000000000023" r="13" fill="none" stroke="url(#pw)" stroke-width="3.2"/>
<rect x="61.5" y="14.600000000000023" width="14" height="10" fill="#8fc0cd" stroke="#2f5560" stroke-width="1.6"/>
<path d="M54 19.600000000000023 H61.5" stroke="#2f5560" stroke-width="1.4"/>
<path d="M64 18.100000000000023 H73.5 M64 21.100000000000023 H73.5" stroke="#2f5560" stroke-width="1"/>
<path d="M75.5 11.100000000000023 L56.5 30.100000000000023" stroke="#2f5560" stroke-width="4"/>
<path d="M75.5 11.100000000000023 L56.5 30.100000000000023" stroke="#7fb3c1" stroke-width="2"/>
<circle cx="111" cy="20.600000000000023" r="15" fill="url(#cb)" stroke="#2f5560" stroke-width="0.8" opacity="1"/>
<text transform="translate(111.3 31.800000000000022) scale(0.9 1.2)" x="0" y="0" font-family="Liberation Sans" font-weight="bold" font-size="26" text-anchor="middle" fill="#fff" stroke="#2f5560" stroke-width="1.2" paint-order="stroke">P</text>
<circle cx="156" cy="20.600000000000023" r="15" fill="url(#cb)" stroke="#2f5560" stroke-width="0.8" opacity="1"/>
<text transform="translate(156.3 31.800000000000022) scale(0.9 1.2)" x="0" y="0" font-family="Liberation Sans" font-weight="bold" font-size="26" text-anchor="middle" fill="#fff" stroke="#2f5560" stroke-width="1.2" paint-order="stroke">1</text>
<circle cx="201" cy="20.600000000000023" r="15" fill="url(#cb)" stroke="#2f5560" stroke-width="0.8" opacity="1"/>
<text transform="translate(201.3 31.800000000000022) scale(0.9 1.2)" x="0" y="0" font-family="Liberation Sans" font-weight="bold" font-size="26" text-anchor="middle" fill="#fff" stroke="#2f5560" stroke-width="1.2" paint-order="stroke">2</text>
<circle cx="246" cy="20.600000000000023" r="15" fill="url(#cb)" stroke="#2f5560" stroke-width="0.8" opacity="1"/>
<text transform="translate(246.3 31.800000000000022) scale(0.9 1.2)" x="0" y="0" font-family="Liberation Sans" font-weight="bold" font-size="26" text-anchor="middle" fill="#fff" stroke="#2f5560" stroke-width="1.2" paint-order="stroke">3</text>
<circle cx="291" cy="20.600000000000023" r="15" fill="url(#cb)" stroke="#2f5560" stroke-width="0.8" opacity="1"/>
<text transform="translate(291.3 31.800000000000022) scale(0.9 1.2)" x="0" y="0" font-family="Liberation Sans" font-weight="bold" font-size="26" text-anchor="middle" fill="#fff" stroke="#2f5560" stroke-width="1.2" paint-order="stroke">4</text>
<circle cx="336" cy="20.600000000000023" r="15" fill="url(#cb)" stroke="#2f5560" stroke-width="0.8" opacity="1"/>
<text transform="translate(336.3 31.800000000000022) scale(0.9 1.2)" x="0" y="0" font-family="Liberation Sans" font-weight="bold" font-size="26" text-anchor="middle" fill="#fff" stroke="#2f5560" stroke-width="1.2" paint-order="stroke">5</text>
<circle cx="381" cy="20.600000000000023" r="15" fill="url(#cr)" stroke="#6d1413" stroke-width="0.8" opacity="1"/>
<text transform="translate(381.3 31.800000000000022) scale(0.9 1.2)" x="0" y="0" font-family="Liberation Sans" font-weight="bold" font-size="26" text-anchor="middle" fill="#fff" stroke="#6d1413" stroke-width="1.2" paint-order="stroke">?</text>
</svg>
<div class="sl" style="top:470px"><div class="sll">Pohyb</div></div>
<svg class="a" style="left:728.5px;top:466px" width="7" height="20" viewBox="0 0 7 20"><path d="M3.5 0 L7 5 V15 L3.5 20 L0 15 V5 Z" fill="#000"/></svg>
<div class="num" style="left:966px;top:466.5px"><div class="v">100</div><div class="spin"><div style="top:0"></div><div style="top:8px"></div></div></div>
<div class="sl" style="top:502px"><div class="sll">Průtok plastu</div></div>
<svg class="a" style="left:796.9px;top:498px" width="7" height="20" viewBox="0 0 7 20"><path d="M3.5 0 L7 5 V15 L3.5 20 L0 15 V5 Z" fill="#000"/></svg>
<div class="num" style="left:966px;top:498.5px"><div class="v">99</div><div class="spin"><div style="top:0"></div><div style="top:8px"></div></div></div>
<div class="sl" style="top:534px"><div class="sll">Ventilátor</div></div>
<svg class="a" style="left:956.5px;top:530px" width="7" height="20" viewBox="0 0 7 20"><path d="M3.5 0 L7 5 V15 L3.5 20 L0 15 V5 Z" fill="#000"/></svg>
<div class="num" style="left:966px;top:530.5px"><div class="v">100</div><div class="spin"><div style="top:0"></div><div style="top:8px"></div></div></div>
<div class="temp" style="top:566px"><div class="tl" style="left:9px">Bed Temperature</div><div class="tl" style="right:5px;font-size:9.8px">20,14°C</div></div>
<svg class="a" style="left:696.2px;top:566px" width="6" height="12" viewBox="0 0 6 12"><path d="M3 0 L6 6 L3 12 L0 6 Z" fill="#000"/></svg>
<svg class="a" style="left:859.7px;top:562px" width="8" height="20" viewBox="0 0 8 20"><path d="M0 0 H8 L4 6 Z M0 20 H8 L4 14 Z" fill="#000"/><path d="M4 2 V18" stroke="#000" stroke-width="1.2"/></svg>
<div class="num" style="left:966px;top:562px;width:48px"><div class="v">83</div><div class="spin"><div style="top:0"></div><div style="top:8px"></div></div></div>
<div class="temp" style="top:598px"><div class="tl" style="left:9px">Extruder 1</div><div class="tl" style="right:5px;font-size:9.8px">17,83°C</div></div>
<svg class="a" style="left:663.3px;top:598px" width="6" height="12" viewBox="0 0 6 12"><path d="M3 0 L6 6 L3 12 L0 6 Z" fill="#000"/></svg>
<svg class="a" style="left:867px;top:594px" width="8" height="20" viewBox="0 0 8 20"><path d="M0 0 H8 L4 6 Z M0 20 H8 L4 14 Z" fill="#000"/><path d="M4 2 V18" stroke="#000" stroke-width="1.2"/></svg>
<div class="num" style="left:966px;top:594px;width:48px"><div class="v">200</div><div class="spin"><div style="top:0"></div><div style="top:8px"></div></div></div>
<div class="a" style="left:598px;top:631px;width:438px;height:42px;border:1px solid #d5dfe5;border-radius:3px"></div>
<div class="ms" style="left:604px;top:624px;padding:0 2px;background:#f0f0f0">Nastavení Debugu</div>
<div class="btn" style="left:607px;top:644px;width:88px;height:21px"></div>
<svg class="a" style="left:609px;top:647px" width="14" height="14" viewBox="0 0 14 14"><defs><radialGradient id="led607" cx="0.5" cy="0.5" r="0.5"><stop offset="0" stop-color="#b8f6ff"/><stop offset="1" stop-color="#86dcfa"/></radialGradient></defs><circle cx="7" cy="7" r="5.2" fill="url(#led607)" stroke="#2a3b55" stroke-width="1.6"/></svg>
<div class="ms" style="left:638px;top:648px">Echo</div>
<div class="btn" style="left:697px;top:644px;width:88px;height:21px"></div>
<svg class="a" style="left:699px;top:647px" width="14" height="14" viewBox="0 0 14 14"><defs><radialGradient id="led697" cx="0.5" cy="0.5" r="0.5"><stop offset="0" stop-color="#b8f6ff"/><stop offset="1" stop-color="#86dcfa"/></radialGradient></defs><circle cx="7" cy="7" r="5.2" fill="url(#led697)" stroke="#2a3b55" stroke-width="1.6"/></svg>
<div class="ms" style="left:731px;top:648px">Info</div>
<div class="btn" style="left:788px;top:644px;width:88px;height:21px"></div>
<svg class="a" style="left:790px;top:647px" width="14" height="14" viewBox="0 0 14 14"><defs><radialGradient id="led788" cx="0.5" cy="0.5" r="0.5"><stop offset="0" stop-color="#b8f6ff"/><stop offset="1" stop-color="#86dcfa"/></radialGradient></defs><circle cx="7" cy="7" r="5.2" fill="url(#led788)" stroke="#2a3b55" stroke-width="1.6"/></svg>
<div class="ms" style="left:815px;top:648px">Chyby</div>
<div class="btn" style="left:878px;top:644px;width:100px;height:21px"></div>
<svg class="a" style="left:880px;top:647px" width="14" height="14" viewBox="0 0 14 14"><defs><radialGradient id="led878" cx="0.5" cy="0.5" r="0.5"><stop offset="0" stop-color="#b8f6ff"/><stop offset="1" stop-color="#86dcfa"/></radialGradient></defs><circle cx="7" cy="7" r="5.2" fill="url(#led878)" stroke="#2a3b55" stroke-width="1.6"/></svg>
<div class="ms" style="left:893px;top:648px">Tisk nanečisto</div>
<div class="btn" style="left:996px;top:644px;width:31px;height:21px"></div>
<div class="ms" style="left:1003px;top:648px">OK</div>
<svg class="a" style="left:600px;top:462px" width="36" height="156" viewBox="600 462 36 156">
<defs><linearGradient id="sp" x1="0" x2="1"><stop offset="0" stop-color="#000" stop-opacity="0"/><stop offset="1" stop-color="#000" stop-opacity="0.7"/></linearGradient></defs>
<path d="M606 468.6 H621 M614 471.2 H619.5 M610 475.2 H619.5 M609 478.3 H617.5" stroke="url(#sp)" stroke-width="1"/>
<circle cx="628.6" cy="469" r="2.6" fill="#000"/>
<path d="M618.5 471.5 L621.5 467.5 L624.5 470.5 L622 475 L617.5 480 L612.5 485" fill="none" stroke="#000" stroke-width="2" stroke-linejoin="round" stroke-linecap="round"/>
<path d="M624.5 470.5 L625.8 475.5 H629.5 M622 475 L624.5 479.8 L618.5 482.3" fill="none" stroke="#000" stroke-width="2" stroke-linejoin="round" stroke-linecap="round"/>
<g fill="#000"><rect x="608.1" y="498" width="2.9" height="9.8"/><rect x="613.8" y="500.3" width="2.9" height="7.5"/><rect x="619.4" y="502.5" width="2.7" height="5.3"/><rect x="625" y="504.5" width="2.8" height="3.3"/>
<rect x="608" y="512.8" width="17" height="2.6"/><path d="M623.5 510 L628.3 514.1 L623.5 518 Z"/></g>
<g fill="#000"><ellipse cx="613.8" cy="534.6" rx="4.3" ry="4.6" transform="rotate(-30 613.8 534.6)"/><ellipse cx="622.2" cy="545.3" rx="4.3" ry="4.6" transform="rotate(-30 622.2 545.3)"/><ellipse cx="624.6" cy="537" rx="3.4" ry="3.8"/><ellipse cx="611.3" cy="542.6" rx="3.4" ry="3.8"/><circle cx="617.9" cy="540" r="2.5"/></g>
<path d="M608.4 549.1 L627.5 530.6" stroke="#fff" stroke-width="3.6" opacity="0.8"/>
<path d="M608.4 549.1 L627.5 530.6" stroke="#ff0000" stroke-width="2.2"/>
<path d="M607.5 562.5 H628.5 L631.6 581 H604.4 Z M606.5 568.5 H629.5 M605.5 574.5 H630.5 M614.5 562.5 L613.5 581 M621.5 562.5 L622.5 581" fill="none" stroke="#000" stroke-width="1.8"/>
<path d="M608.4 581 L627.5 562.6" stroke="#ff0000" stroke-width="2.2"/>
<path d="M604.3 593.9 H611.2 V608 L608 612.5 L604.3 608 Z" fill="#000"/>
<path d="M614.8 601.5 L618.5 598.8 V610.3" fill="none" stroke="#000" stroke-width="1.7"/>
<path d="M608.4 613.4 L627.5 594.6" stroke="#ff0000" stroke-width="2.2"/>
</svg>
<svg class="a" style="left:997px;top:467.5px" width="14" height="17" viewBox="0 0 14 17"><path d="M4 6 L7 3 L10 6 Z M4 11 L7 14 L10 11 Z" fill="#4d61a8"/></svg>
<svg class="a" style="left:997px;top:499.5px" width="14" height="17" viewBox="0 0 14 17"><path d="M4 6 L7 3 L10 6 Z M4 11 L7 14 L10 11 Z" fill="#4d61a8"/></svg>
<svg class="a" style="left:997px;top:531.5px" width="14" height="17" viewBox="0 0 14 17"><path d="M4 6 L7 3 L10 6 Z M4 11 L7 14 L10 11 Z" fill="#4d61a8"/></svg>
<svg class="a" style="left:998px;top:563px" width="14" height="17" viewBox="0 0 14 17"><path d="M4 6 L7 3 L10 6 Z M4 11 L7 14 L10 11 Z" fill="#4d61a8"/></svg>
<svg class="a" style="left:998px;top:595px" width="14" height="17" viewBox="0 0 14 17"><path d="M4 6 L7 3 L10 6 Z M4 11 L7 14 L10 11 Z" fill="#4d61a8"/></svg>
<div class="a" style="left:1029px;top:838px;width:2px;height:2px;background:#9a9a9a"></div>
<div class="a" style="left:1033px;top:838px;width:2px;height:2px;background:#9a9a9a"></div>
<div class="a" style="left:1033px;top:834px;width:2px;height:2px;background:#9a9a9a"></div>

</body></html>
